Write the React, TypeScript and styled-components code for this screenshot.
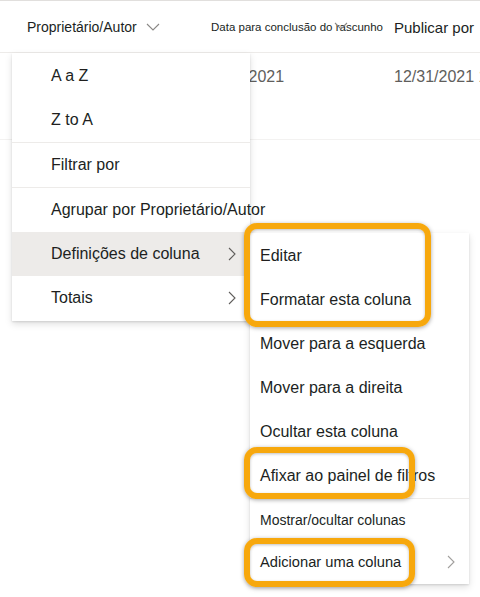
import styled, { createGlobalStyle } from "styled-components";

const GlobalStyle = createGlobalStyle`
  body {
    margin: 0;
    background: #fff;
    font-family: "Liberation Sans", Arial, sans-serif;
    color: #323130;
  }
`;

const Page = styled.div`
  position: relative;
  width: 480px;
  height: 597px;
  overflow: hidden;
  background: #fff;
  border-top: 1px solid #e1dfdd;
  box-sizing: border-box;
`;

const Header = styled.div`
  display: flex;
  align-items: stretch;
  height: 51px;
  border-bottom: 1px solid #edebe9;
  white-space: nowrap;
`;

const HeadCell = styled.div<{ $width?: number; $size: number; $pad?: number }>`
  position: relative;
  display: flex;
  align-items: center;
  gap: 9px;
  flex: 0 0 ${(p) => (p.$width ? `${p.$width}px` : "auto")};
  padding: 1px 0 0 ${(p) => p.$pad ?? 0}px;
  box-sizing: border-box;
  font-size: ${(p) => p.$size}px;
  color: #201f1e;
`;

const SortChevron = styled.svg<{ $over?: boolean }>`
  width: 14px;
  height: 8px;
  flex: none;
  ${(p) => (p.$over ? "position: absolute; left: 123px; top: 21px;" : "")}
`;

const Row = styled.div`
  display: flex;
  height: 87px;
  padding-top: 15px;
  box-sizing: border-box;
  border-bottom: 1px solid #f3f2f1;
  white-space: nowrap;
  font-size: 16px;
  color: #605e5c;
`;

const Cell = styled.div<{ $width?: number }>`
  flex: 0 0 ${(p) => (p.$width ? `${p.$width}px` : "auto")};
  box-sizing: border-box;
`;

const Menu = styled.div<{ $left: number; $top: number; $width: number }>`
  position: absolute;
  left: ${(p) => p.$left}px;
  top: ${(p) => p.$top}px;
  width: ${(p) => p.$width}px;
  background: #fff;
  padding: 1px 0;
  box-shadow: 0 3.2px 7.2px rgba(0, 0, 0, 0.13), 0 0.6px 1.8px rgba(0, 0, 0, 0.11);
`;

const Item = styled.div<{ $pad: number; $active?: boolean; $size?: number; $h?: number }>`
  display: flex;
  align-items: center;
  justify-content: space-between;
  height: ${(p) => p.$h ?? 44}px;
  padding: 0 14px 0 ${(p) => p.$pad}px;
  font-size: ${(p) => p.$size ?? 16}px;
  color: #201f1e;
  white-space: nowrap;
  background: ${(p) => (p.$active ? "#edebe9" : "transparent")};
`;

const Divider = styled.div`
  height: 1px;
  background: #edebe9;
`;

const Chevron = styled.svg<{ $light?: boolean }>`
  width: 8px;
  height: 14px;
  flex: none;
  color: ${(p) => (p.$light ? "#a19f9d" : "#605e5c")};
`;

const Highlight = styled.div<{ $inset: string }>`
  position: relative;
  &::after {
    content: "";
    position: absolute;
    inset: ${(p) => p.$inset};
    border: 6px solid #f7a80d;
    border-radius: 13px;
    box-shadow: 0 1px 4px rgba(0, 0, 0, 0.35), inset 0 1px 3px rgba(0, 0, 0, 0.25);
    pointer-events: none;
  }
`;

const Right = ({ light }: { light?: boolean }) => (
  <Chevron viewBox="0 0 8 14" $light={light}>
    <path d="M1 1l6 6-6 6" fill="none" stroke="currentColor" strokeWidth="1.1" />
  </Chevron>
);

const Down = ({ over }: { over?: boolean }) => (
  <SortChevron viewBox="0 0 14 8" $over={over}>
    <path d="M1 1l6 6 6-6" fill="none" stroke="#8a8886" strokeWidth="1.1" />
  </SortChevron>
);

export default function App() {
  return (
    <>
      <GlobalStyle />
      <Page>
        <Header>
          <HeadCell $width={211} $size={14} $pad={27}>
            Proprietário/Autor
            <Down />
          </HeadCell>
          <HeadCell $width={183} $size={11.5}>
            Data para conclusão do rascunho
            <Down over />
          </HeadCell>
          <HeadCell $size={15}>Publicar por</HeadCell>
        </Header>
        <Row>
          <Cell $width={204} />
          <Cell $width={190}>12/31/2021</Cell>
          <Cell>12/31/2021 1</Cell>
        </Row>

        <Menu $left={12} $top={52} $width={238}>
          <Item $pad={39}>A a Z</Item>
          <Item $pad={39}>Z to A</Item>
          <Divider />
          <Item $pad={39}>Filtrar por</Item>
          <Divider />
          <Item $pad={39}>Agrupar por Proprietário/Autor</Item>
          <Item $pad={39} $active>
            Definições de coluna
            <Right />
          </Item>
          <Item $pad={39}>
            Totais
            <Right />
          </Item>
        </Menu>

        <Menu $left={250} $top={232} $width={219}>
          <Highlight $inset="-11px 38px -5px -6px">
            <Item $pad={10}>Editar</Item>
            <Item $pad={10}>Formatar esta coluna</Item>
          </Highlight>
          <Item $pad={10}>Mover para a esquerda</Item>
          <Item $pad={10}>Mover para a direita</Item>
          <Item $pad={10}>Ocultar esta coluna</Item>
          <Highlight $inset="-7px 54px -1px -6px">
            <Item $pad={10}>Afixar ao painel de filtros</Item>
          </Highlight>
          <Divider />
          <Item $pad={10} $size={14} $h={42}>
            Mostrar/ocultar colunas
          </Item>
          <Highlight $inset="-3px 54px -4px -6px">
            <Item $pad={10} $size={14.7} $h={42}>
              Adicionar uma coluna
              <Right light />
            </Item>
          </Highlight>
        </Menu>
      </Page>
    </>
  );
}
